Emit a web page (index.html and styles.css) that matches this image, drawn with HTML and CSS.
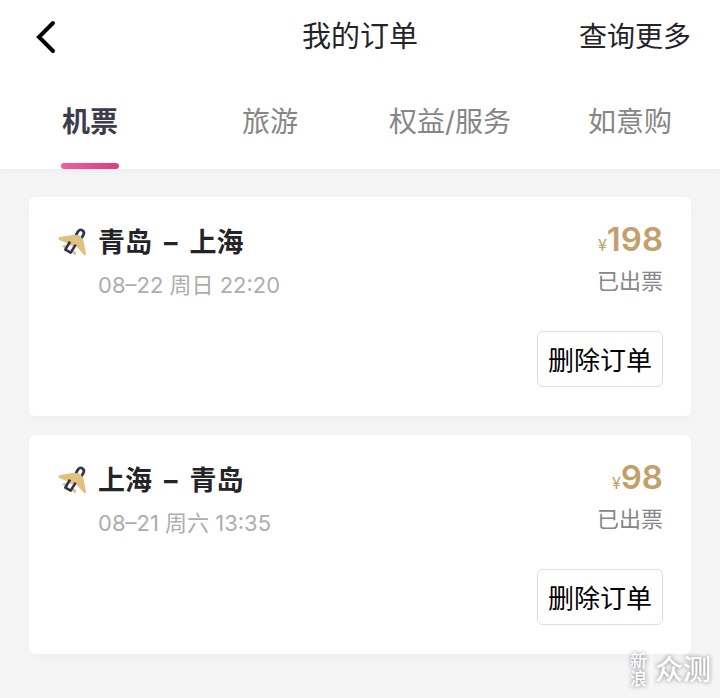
FILE: index.html
```html
<!DOCTYPE html>
<html lang="zh-CN">
<head>
<meta charset="utf-8">
<meta name="viewport" content="width=device-width, initial-scale=1">
<title>我的订单</title>
<link rel="stylesheet" href="styles.css">
</head>
<body>
<svg class="defs" aria-hidden="true">
  <symbol id="plane" viewBox="0 0 90 90">
    <path d="M15 58 Q18 53 28 55 L56 74 Q59 82 53 85 Q48 76 36 72 Z" fill="#dcc07c"/>
    <path d="M56 26 L62 15 Q68 5 76 10 Q84 15 79 24 L72 36 Z" fill="#fff" stroke="#33344c" stroke-width="8" stroke-linejoin="round"/>
    <path d="M4 36 Q3 31 9 30 L50 23 Q62 22 71 29 Q79 35 80 43 L87 79 Q88 87 81 84 L57 57 L36 50 L8 40 Z" fill="#dfc27f"/>
    <path d="M39 45 L25 68 L41 77 L57 53" fill="#fff"/>
    <path d="M36 42 L62 50 L55 60 L34 53 Z" fill="#dfc27f"/>
    <path d="M39 44 L25 68 L41 77 L56 53" fill="none" stroke="#33344c" stroke-width="8" stroke-linejoin="round"/>
  </symbol>
</svg>
<header class="top">
  <div class="bar">
    <button class="back" type="button" aria-label="返回">
      <svg class="back-icon" viewBox="0 0 20 34" aria-hidden="true"><path d="M17 3 L3 17 L17 31" fill="none" stroke="#000" stroke-width="4" stroke-linecap="round" stroke-linejoin="miter"/></svg>
    </button>
    <h1 class="title">我的订单</h1>
    <a class="more" href="#more">查询更多</a>
  </div>
  <nav class="tabs">
    <a class="tab active" href="#flight" aria-current="page">机票</a>
    <a class="tab" href="#travel">旅游</a>
    <a class="tab" href="#rights">权益/服务</a>
    <a class="tab" href="#shop">如意购</a>
  </nav>
</header>
<main class="orders">
  <article class="card">
    <div class="row">
      <svg class="plane" aria-hidden="true"><use href="#plane"/></svg>
      <div class="trip">
        <h2 class="route"><span>青岛</span><span>–</span><span>上海</span></h2>
        <p class="date">08–22 周日 22:20</p>
      </div>
      <div class="cost">
        <p class="price"><span class="yen">¥</span>198</p>
        <p class="status">已出票</p>
      </div>
    </div>
    <button class="delete" type="button">删除订单</button>
  </article>
  <article class="card">
    <div class="row">
      <svg class="plane" aria-hidden="true"><use href="#plane"/></svg>
      <div class="trip">
        <h2 class="route"><span>上海</span><span>–</span><span>青岛</span></h2>
        <p class="date">08–21 周六 13:35</p>
      </div>
      <div class="cost">
        <p class="price"><span class="yen">¥</span>98</p>
        <p class="status">已出票</p>
      </div>
    </div>
    <button class="delete" type="button">删除订单</button>
  </article>
</main>
<div class="watermark"><span class="brand">新浪</span><span class="name">众测</span></div>
</body>
</html>
```
FILE: styles.css
```css
* { box-sizing: border-box; }
body {
  margin: 0;
  min-height: 100vh;
  position: relative;
  background: #f5f5f5;
  color: #242428;
  font-family: Inter, "Noto Sans CJK SC", sans-serif;
}
h1, h2, p { margin: 0; }
a { color: inherit; text-decoration: none; }
button { font: inherit; cursor: pointer; }
.defs { position: absolute; width: 0; height: 0; }

.top { background: #fff; box-shadow: 0 2px 8px rgba(0, 0, 0, 0.04); }
.bar {
  display: grid;
  grid-template-columns: 1fr auto 1fr;
  align-items: center;
  height: 73px;
  padding: 0 29px 0 36px;
}
.back { justify-self: start; display: flex; padding: 0; border: 0; background: none; }
.back-icon { width: 20px; height: 34px; }
.title { font-size: 29px; font-weight: 400; line-height: 40px; margin-right: 7px; }
.more { justify-self: end; font-size: 28px; line-height: 40px; }

.tabs { display: grid; grid-template-columns: repeat(4, 1fr); height: 96px; }
.tab {
  position: relative;
  display: flex;
  align-items: center;
  justify-content: center;
  padding-bottom: 2px;
  font-size: 28px;
  color: #868686;
}
.active { color: #3c3c4a; font-weight: 700; }
.active::after {
  content: "";
  position: absolute;
  bottom: 0;
  width: 58px;
  height: 6px;
  border-radius: 3px;
  background: linear-gradient(90deg, #ee609c, #dc3c84);
}

.orders { display: grid; gap: 19px; padding: 28px 29px 44px; }
.card {
  display: flex;
  flex-direction: column;
  gap: 24px;
  padding: 24px 28px 29px;
  border-radius: 6px;
  background: #fff;
  box-shadow: 0 4px 12px rgba(0, 0, 0, 0.03);
}
.row { display: flex; align-items: flex-start; }
.plane { width: 30px; height: 30px; margin-top: 6px; }
.trip { flex: 1; padding: 2px 0 0 11px; }
.route { display: flex; gap: 12px; font-size: 27px; line-height: 40px; font-weight: 700; }
.date { font-size: 22px; line-height: 44px; color: #adadad; }
.cost { text-align: right; }
.price { font-size: 33px; line-height: 36px; font-weight: 600; color: #c39f6c; }
.yen { font-size: 16px; font-weight: 400; }
.status { font-size: 22px; line-height: 36px; color: #868686; }
.delete {
  align-self: flex-end;
  height: 56px;
  padding: 0 10px 2px;
  border: 1px solid #dedede;
  border-radius: 6px;
  background: #fff;
  color: #000;
  font-size: 26px;
}

.watermark {
  position: absolute;
  right: 9px;
  bottom: 10px;
  display: flex;
  align-items: center;
  color: #fff;
  text-shadow: 0 0 4px rgba(0, 0, 0, 0.5);
}
.brand { width: 22px; padding-right: 4px; border-right: 1px solid #fff; font-size: 17px; line-height: 18px; font-weight: 500; }
.name { padding-left: 3px; font-size: 28px; line-height: 36px; font-weight: 500; }
```
